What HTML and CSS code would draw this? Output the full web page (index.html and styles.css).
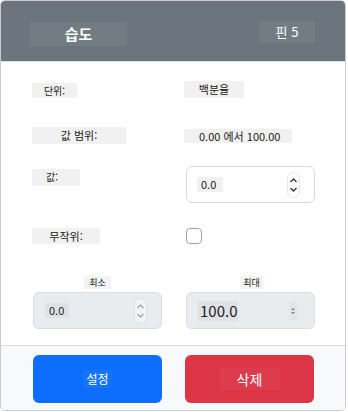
FILE: index.html
```html
<!DOCTYPE html>
<html lang="ko">
<head>
<meta charset="utf-8">
<link rel="stylesheet" href="styles.css">
</head>
<body>
<div class="card">
  <div class="header">
    <div class="title">습도</div>
    <div class="pin">핀 5</div>
  </div>
  <div class="body">
    <div class="row row-unit">
      <div class="cell"><span class="lbl lbl-unit">단위:</span></div>
      <div class="cell"><span class="val val-unit">백분율</span></div>
    </div>
    <div class="row row-range">
      <div class="cell"><span class="lbl lbl-range">값 범위:</span></div>
      <div class="cell"><span class="val val-range">0.00 에서 100.00</span></div>
    </div>
    <div class="row row-value">
      <div class="cell"><span class="lbl lbl-value">값:</span></div>
      <div class="cell">
        <div class="input">
          <span class="num">0.0</span>
          <svg class="spin" width="13" height="26" viewBox="0 0 13 26"><rect x="0.5" y="0.5" width="12" height="25" rx="6" fill="#fff" stroke="#e6e6e6"/><path d="M3.5 10 L6.5 7 L9.5 10" fill="none" stroke="#333" stroke-width="1.3"/><path d="M3.5 16 L6.5 19 L9.5 16" fill="none" stroke="#333" stroke-width="1.3"/></svg>
        </div>
      </div>
    </div>
    <div class="row row-random">
      <div class="cell"><span class="lbl lbl-random">무작위:</span></div>
      <div class="cell"><span class="check"></span></div>
    </div>
    <div class="row row-minmax">
      <div class="mm">
        <span class="mlbl">최소</span>
        <div class="input disabled">
          <span class="num">0.0</span>
          <svg class="spin" width="13" height="26" viewBox="0 0 13 26"><rect x="0.5" y="0.5" width="12" height="25" rx="6" fill="#f3f4f5" stroke="#dcdfe2"/><path d="M3.5 10 L6.5 7 L9.5 10" fill="none" stroke="#9aa0a6" stroke-width="1.2"/><path d="M3.5 16 L6.5 19 L9.5 16" fill="none" stroke="#9aa0a6" stroke-width="1.2"/></svg>
        </div>
      </div>
      <div class="mm">
        <span class="mlbl mlbl-max">최대</span>
        <div class="input disabled">
          <span class="num big">100.0</span>
          <svg class="spin small" width="8" height="18" viewBox="0 0 8 18"><rect x="0" y="0" width="8" height="18" rx="2" fill="#e2e5e8"/><path d="M2.8 8 L4 6.6 L5.2 8" fill="none" stroke="#444" stroke-width="0.9"/><path d="M2.8 10 L4 11.4 L5.2 10" fill="none" stroke="#444" stroke-width="0.9"/></svg>
        </div>
      </div>
    </div>
  </div>
  <div class="footer">
    <button class="btn btn-set"><span class="btxt">설정</span></button>
    <button class="btn btn-del"><span class="btxt btxt-del">삭제</span></button>
  </div>
</div>
</body>
</html>
```

FILE: styles.css
```css
* { box-sizing: border-box; }
html, body { margin: 0; padding: 0; background: #fff; }
body { font-family: "Noto Sans CJK KR", "Noto Sans", sans-serif; color: #212529; }

.card {
  width: 346px;
  height: 411px;
  border: 1px solid #c9cdd1;
  border-radius: 5px;
  overflow: hidden;
  display: flex;
  flex-direction: column;
  background: #fff;
}

.header {
  height: 61px;
  background: #6c757d;
  border-bottom: 1px solid #dfe2e5;
  display: flex;
  align-items: center;
  justify-content: space-between;
  padding: 0 30px 0 29px;
  color: #fff;
  flex-shrink: 0;
}
.title {
  width: 97px;
  height: 24px;
  line-height: 24px;
  text-align: center;
  font-size: 15px;
  font-weight: 600;
  background: rgba(255,255,255,0.05);
  margin-top: 6px;
}
.pin {
  width: 56px;
  height: 22px;
  line-height: 22px;
  text-align: center;
  font-size: 13px;
  font-weight: 400;
  background: rgba(255,255,255,0.05);
  margin-top: 2px;
}

.body {
  flex: 1;
  padding: 19px 31px 0 32px;
}
.row {
  display: grid;
  grid-template-columns: 129px 129px;
  column-gap: 24px;
  align-items: start;
}
.cell { display: flex; }

.lbl, .val, .mlbl {
  display: inline-block;
  background: #f1f1f1;
  color: #222;
  text-align: center;
  font-size: 10px;
}
.lbl { margin-left: -1px; }

.row-unit { height: 17px; }
.lbl-unit { width: 45px; height: 15px; line-height: 15px; margin-top: 2px; }
.val-unit { width: 60px; height: 17px; line-height: 17px; font-size: 11px; margin-left: -2px; }

.row-range { margin-top: 29px; height: 17px; }
.lbl-range { width: 94px; height: 17px; line-height: 17px; font-size: 11px; }
.val-range { width: 108px; height: 14px; line-height: 14px; font-size: 11px; margin-top: 2px; margin-left: -2px; text-align: left; padding-left: 15px; }

.row-value { margin-top: 22px; }
.lbl-value { width: 48px; height: 17px; line-height: 15px; font-size: 10px; margin-top: 3px; text-align: left; padding-left: 14px; }

.input {
  width: 129px;
  height: 37px;
  border: 1px solid #d6d9dc;
  border-radius: 6px;
  background: #fff;
  display: flex;
  align-items: center;
  justify-content: space-between;
  padding: 0 14px 0 10px;
}
.num {
  background: #f1f1f1;
  font-size: 11px;
  height: 15px;
  line-height: 15px;
  padding: 0 4px;
  width: 26px;
  color: #222;
}
.spin { display: block; }

.row-random { margin-top: 25px; }
.lbl-random { width: 68px; height: 16px; line-height: 16px; font-size: 11px; }
.check {
  width: 16px;
  height: 16px;
  border: 1px solid #9da3a8;
  border-radius: 4px;
  background: #fff;
}

.row-minmax { margin-top: 32px; }
.mm {
  display: flex;
  flex-direction: column;
  align-items: center;
}
.mlbl {
  height: 13px;
  line-height: 13px;
  font-size: 9px;
  padding: 0 5px;
  background: #f3f3f3;
  margin-bottom: 3px;
  white-space: nowrap;
}
.mlbl-max { padding: 0 3px; margin-left: 2px; }
.input.disabled {
  background: #e9ecef;
  border-color: #dadee2;
}
.disabled .num { background: #dfe2e5; width: 24px; margin-left: 1px; }
.disabled .num.big {
  font-size: 15px;
  height: 20px;
  line-height: 20px;
  width: 40px;
  padding: 0 2px;
  margin-left: 1px;
}
.spin.small { margin-right: 3px; }

.footer {
  height: 65px;
  flex-shrink: 0;
  background: #f8f9fa;
  border-top: 1px solid #d9dcdf;
  display: flex;
  justify-content: space-between;
  padding: 9px 31px 0 32px;
}
.btn {
  width: 129px;
  height: 48px;
  border: none;
  border-radius: 6px;
  color: #fff;
  font-family: inherit;
  font-size: 12px;
  display: flex;
  align-items: center;
  justify-content: center;
  padding: 0;
}
.btn-set { background: #0d6efd; }
.btn-del { background: #dc3545; font-size: 14px; }
.btxt {
  background: rgba(255,255,255,0.04);
  padding: 1px 3px;
  line-height: 16px;
}
.btxt-del { width: 60px; height: 22px; line-height: 22px; padding: 0; text-align: center; }
```
